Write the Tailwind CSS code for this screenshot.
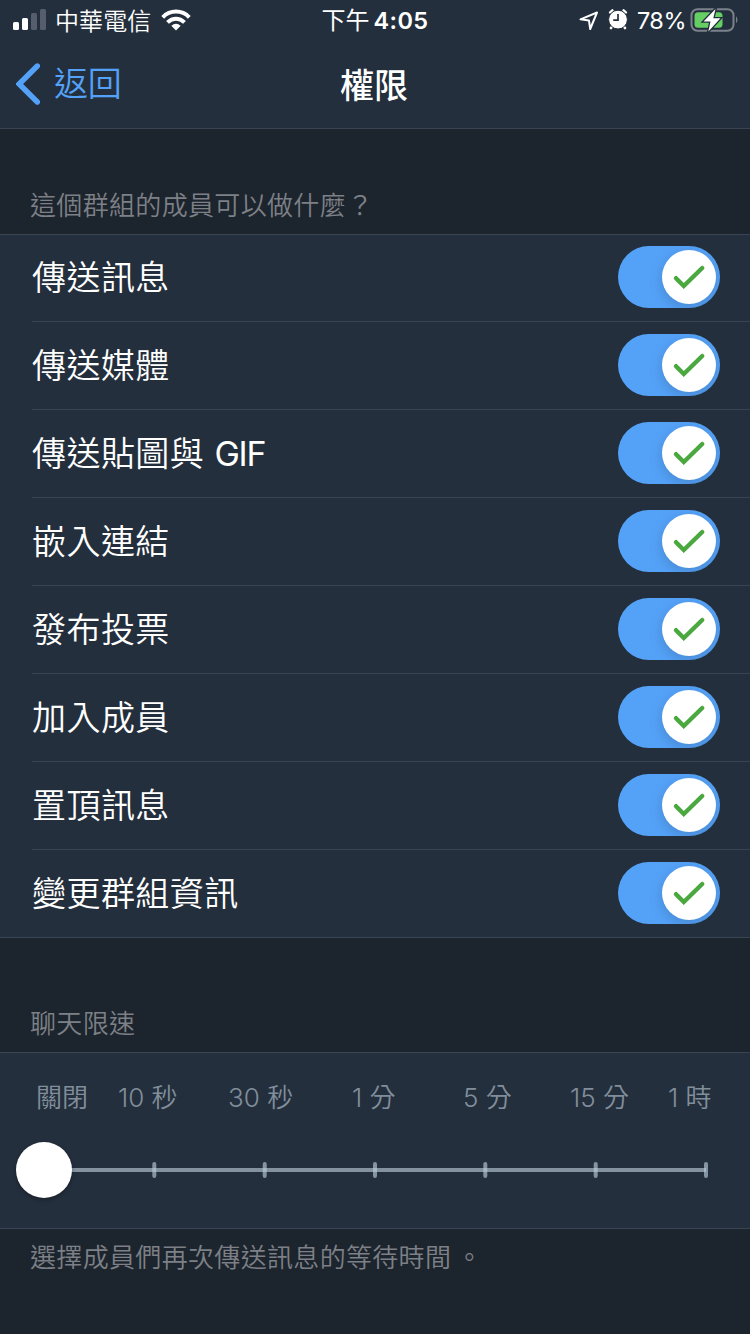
<!DOCTYPE html>
<html lang="zh-Hant">
<head>
<meta charset="utf-8">
<title>權限</title>
<script src="https://cdn.jsdelivr.net/npm/@tailwindcss/browser@4"></script>
</head>
<body class="w-[750px] h-[1334px] overflow-hidden bg-[#1c242d] text-white font-['Inter','Noto_Sans_CJK_TC',sans-serif]">
<svg class="hidden">
  <symbol id="check" viewBox="0 0 54 54"><path d="M14 28.2 21.8 36 40.2 18" fill="none" stroke="#49a83e" stroke-width="4.4" stroke-linecap="round"/></symbol>
</svg>
<header class="h-[129px] bg-[#242f3d] border-b border-[#3a4453]">
  <div class="h-10 grid grid-cols-[1fr_auto_1fr] items-center pl-[13px] pr-[11px]">
    <div class="flex items-center">
      <svg class="w-[34px] h-[22px]" viewBox="0 0 34 22"><rect y="13" width="6" height="8" rx="1.5" fill="#fff"/><rect x="9" y="9" width="6" height="12" rx="1.5" fill="#fff"/><rect x="18" y="4" width="6" height="17" rx="1.5" fill="#565e6d"/><rect x="27" width="6" height="21" rx="1.5" fill="#565e6d"/></svg>
      <span class="ml-2 pt-[3px] text-[24px] leading-[37px] whitespace-nowrap font-[350] tracking-[0.1px]">中華電信</span>
      <svg class="ml-[10px] w-[30px] h-[22px]" viewBox="0 0 30 22"><g fill="none" stroke="#fff" stroke-width="4"><path d="M1.7 8.3C9.2.7 20.8.7 28.3 8.3"/><path d="M6.5 13.4C11.6 8.5 18.4 8.5 23.5 13.4"/></g><path d="M10.3 16.8Q15 12.8 19.7 16.8L15 21.6Z" fill="#fff"/></svg>
    </div>
    <span class="pt-[2px] pr-[2px] text-[24px] leading-[38px] whitespace-nowrap font-normal">下午<span class="ml-[4px] text-[23.5px] font-semibold tracking-[0.4px]">4:05</span></span>
    <div class="flex items-center justify-end">
      <svg class="w-[20px] h-[20px]" viewBox="0 0 20 20"><path d="M1.5 9.3 18 2.5 11.2 19 10 10.6Z" fill="none" stroke="#fff" stroke-width="2" stroke-linejoin="round"/></svg>
      <svg class="ml-[9px] w-[20px] h-[22px]" viewBox="0 0 20 22"><g stroke="#fff" stroke-width="2.6" stroke-linecap="round"><path d="M2.2 3.4 4.4 1.5M17.8 3.4 15.6 1.5M4.2 17.5 3 19M15.8 17.5 17 19"/></g><circle cx="10" cy="10.6" r="9.4" fill="#fff" stroke="#242f3d" stroke-width="1"/><path d="M10 5V11.2H5.2" fill="none" stroke="#242f3d" stroke-width="1.7"/></svg>
      <span class="ml-[9px] pt-[2px] text-[23.5px] leading-[38px] whitespace-nowrap tracking-[-0.5px] font-normal">78%</span>
      <svg class="ml-1 w-[49px] h-[26px]" viewBox="0 0 49 26"><rect x="1.5" y="2.2" width="42" height="21.5" rx="6" fill="none" stroke="#7b828c" stroke-width="2"/><rect x="4.5" y="5.2" width="28" height="15.5" rx="3.5" fill="#65cf64"/><path d="M46 9.2Q49 12.7 46 16.2Z" fill="#7b828c"/><path d="M25.5 2 13.5 14.5H20.5L18.3 24.5 30.5 11.2H23.3Z" fill="#fff" stroke="#242f3d" stroke-width="2.6" paint-order="stroke"/></svg>
    </div>
  </div>
  <div class="h-[88px] grid grid-cols-[1fr_auto_1fr] items-center px-4">
    <div class="flex items-center text-[#54a2f8]">
      <svg class="w-6 h-[42px]" viewBox="0 0 24 42"><path d="M21.3 3 3.2 21 21.3 39" fill="none" stroke="currentColor" stroke-width="5.4" stroke-linecap="round" stroke-linejoin="miter"/></svg>
      <span class="ml-[14px] text-[34px] leading-[48px] font-[350] tracking-[-0.3px]">返回</span>
    </div>
    <h1 class="pt-[3px] pr-[2px] text-[34px] leading-[48px] font-medium">權限</h1>
  </div>
</header>
<h2 class="h-[105px] pt-[57px] pl-[30px] text-[26px] leading-10 font-[350] tracking-[0.33px] text-[#7d8086]">這個群組的成員可以做什麼<span class="ml-[1px]">？</span></h2>
<main id="rows" class="h-[704px] bg-[#242f3d] border-t border-[#394553]"></main>
<h2 class="h-[114px] pt-[66px] pl-[30px] text-[26px] leading-10 font-[350] tracking-[0.33px] text-[#7d8086]">聊天限速</h2>
<section class="h-[177px] bg-[#242f3d] border-y border-[#394553] pt-[25px]">
  <div class="flex pl-[36px] text-[26px] leading-10 whitespace-nowrap text-[#808e9b] font-[350]">
    <span class="w-[82px]">關閉</span><span class="w-[110px]">10 秒</span><span class="w-[124px]">30 秒</span><span class="w-[111px]">1 分</span><span class="w-[107px]">5 分</span><span class="w-[98px]">15 分</span><span>1 時</span>
  </div>
  <svg class="mt-[19px] w-[750px] h-[70px]" viewBox="0 0 750 70">
    <path d="M44 33H706" stroke="#84919f" stroke-width="4"/>
    <path d="M154.3 27V39M264.7 27V39M375 27V39M485.3 27V39M595.7 27V39M706 27V39" stroke="#bacddd" stroke-opacity=".64" stroke-width="4" stroke-linecap="round"/>
    <circle cx="44" cy="33" r="28" fill="#fff" class="drop-shadow-[0_2px_2px_rgba(0,0,0,0.3)]"/>
  </svg>
</section>
<p class="pt-[9px] pl-[30px] text-[26px] leading-10 font-[350] tracking-[0.33px] text-[#7d8086]">選擇成員們再次傳送訊息的等待時間<span class="ml-[5px]">。</span></p>
<script>
document.getElementById('rows').innerHTML = ['傳送訊息','傳送媒體','傳送貼圖與<span class="ml-[2px] tracking-[-1.3px] font-normal"> GIF</span>','嵌入連結','發布投票','加入成員','置頂訊息','變更群組資訊'].map((t, i) => `
  <div class="h-[88px] flex ${i === 7 ? 'border-b border-[#394553]' : ''} ${i === 0 ? '-mt-px' : ''}">
    <div class="ml-8 flex-1 pr-[30px] pt-3 flex justify-between ${i === 7 ? '' : 'border-b border-[#394553]'}">
      <span class="pt-[2px] text-[34px] leading-[60px] font-[350] tracking-[0.45px]">${t}</span>
      <div class="w-[102px] h-[62px] rounded-full bg-[#54a2f8] p-1 flex justify-end overflow-hidden">
        <div class="size-[54px] rounded-full bg-white shadow-[0_4px_14px_rgba(0,0,0,0.16)]"><svg class="size-[54px]"><use href="#check"/></svg></div>
      </div>
    </div>
  </div>`).join('');
</script>
</body>
</html>
